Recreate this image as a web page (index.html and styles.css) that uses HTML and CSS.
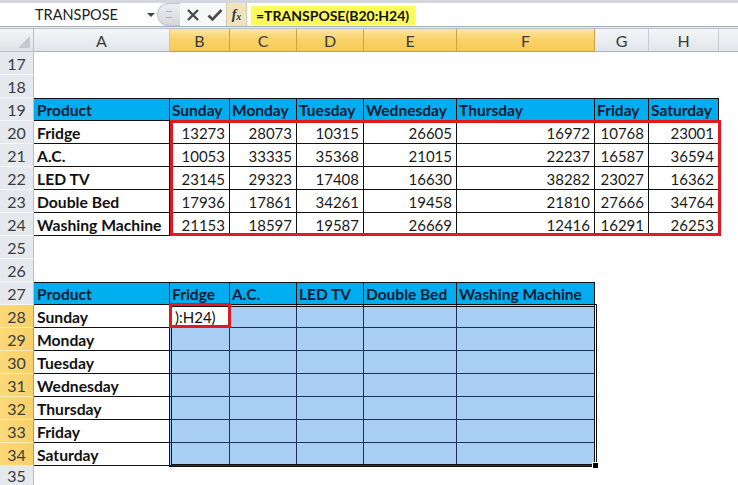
FILE: index.html
```html
<!DOCTYPE html>
<html>
<head>
<meta charset="utf-8">
<link rel="stylesheet" href="styles.css">
</head>
<body>
<div class="app">
  <div class="fbar">
    <div class="namebox"><span class="nbtext">TRANSPOSE</span><span class="dd"></span></div>
    <div class="pill"><span class="grip"></span></div>
    <div class="btns">
      <svg class="ico" width="14" height="14" viewBox="0 0 14 14"><path d="M2 2L12 12M12 2L2 12" stroke="#4a4a4a" stroke-width="2.4" fill="none"/></svg>
      <svg class="ico" width="16" height="14" viewBox="0 0 16 14"><path d="M1.5 7.5L5.5 11.5L14.5 2" stroke="#4a4a4a" stroke-width="2.6" fill="none"/></svg>
    </div>
    <div class="fx"><span>f</span><span class="x">x</span></div>
    <div class="finput"><span class="formula">=TRANSPOSE(B20:H24)</span></div>
  </div>
  <div class="gap"></div>
  <div class="sheet">
    <div class="row colhdr">
      <div class="corner"><span class="tri"></span></div>
      <div class="ch">A</div>
      <div class="ch on">B</div>
      <div class="ch on">C</div>
      <div class="ch on">D</div>
      <div class="ch on">E</div>
      <div class="ch on">F</div>
      <div class="ch">G</div>
      <div class="ch">H</div>
      <div class="ch last"></div>
    </div>
    <div class="row"><div class="rh">17</div></div>
    <div class="row"><div class="rh">18</div></div>
    <div class="row">
      <div class="rh">19</div>
      <div class="c hd top first">Product</div>
      <div class="c hd top">Sunday</div>
      <div class="c hd top">Monday</div>
      <div class="c hd top">Tuesday</div>
      <div class="c hd top">Wednesday</div>
      <div class="c hd top">Thursday</div>
      <div class="c hd top">Friday</div>
      <div class="c hd top">Saturday</div>
    </div>
    <div class="row">
      <div class="rh">20</div>
      <div class="c nm first">Fridge</div>
      <div class="c n">13273</div><div class="c n">28073</div><div class="c n">10315</div><div class="c n">26605</div><div class="c n">16972</div><div class="c n">10768</div><div class="c n">23001</div>
    </div>
    <div class="row">
      <div class="rh">21</div>
      <div class="c nm first">A.C.</div>
      <div class="c n">10053</div><div class="c n">33335</div><div class="c n">35368</div><div class="c n">21015</div><div class="c n">22237</div><div class="c n">16587</div><div class="c n">36594</div>
    </div>
    <div class="row">
      <div class="rh">22</div>
      <div class="c nm first">LED TV</div>
      <div class="c n">23145</div><div class="c n">29323</div><div class="c n">17408</div><div class="c n">16630</div><div class="c n">38282</div><div class="c n">23027</div><div class="c n">16362</div>
    </div>
    <div class="row">
      <div class="rh">23</div>
      <div class="c nm first">Double Bed</div>
      <div class="c n">17936</div><div class="c n">17861</div><div class="c n">34261</div><div class="c n">19458</div><div class="c n">21810</div><div class="c n">27666</div><div class="c n">34764</div>
    </div>
    <div class="row">
      <div class="rh">24</div>
      <div class="c nm first">Washing Machine</div>
      <div class="c n">21153</div><div class="c n">18597</div><div class="c n">19587</div><div class="c n">26669</div><div class="c n">12416</div><div class="c n">16291</div><div class="c n">26253</div>
    </div>
    <div class="row"><div class="rh">25</div></div>
    <div class="row"><div class="rh">26</div></div>
    <div class="row">
      <div class="rh">27</div>
      <div class="c hd top first">Product</div>
      <div class="c hd top">Fridge</div>
      <div class="c hd top">A.C.</div>
      <div class="c hd top">LED TV</div>
      <div class="c hd top">Double Bed</div>
      <div class="c hd top">Washing Machine</div>
    </div>
    <div class="row">
      <div class="rh on">28</div>
      <div class="c nm first">Sunday</div>
      <div class="c s active">):H24)</div><div class="c s"></div><div class="c s"></div><div class="c s"></div><div class="c s"></div>
    </div>
    <div class="row">
      <div class="rh on">29</div>
      <div class="c nm first">Monday</div>
      <div class="c s"></div><div class="c s"></div><div class="c s"></div><div class="c s"></div><div class="c s"></div>
    </div>
    <div class="row">
      <div class="rh on">30</div>
      <div class="c nm first">Tuesday</div>
      <div class="c s"></div><div class="c s"></div><div class="c s"></div><div class="c s"></div><div class="c s"></div>
    </div>
    <div class="row">
      <div class="rh on">31</div>
      <div class="c nm first">Wednesday</div>
      <div class="c s"></div><div class="c s"></div><div class="c s"></div><div class="c s"></div><div class="c s"></div>
    </div>
    <div class="row">
      <div class="rh on">32</div>
      <div class="c nm first">Thursday</div>
      <div class="c s"></div><div class="c s"></div><div class="c s"></div><div class="c s"></div><div class="c s"></div>
    </div>
    <div class="row">
      <div class="rh on">33</div>
      <div class="c nm first">Friday</div>
      <div class="c s"></div><div class="c s"></div><div class="c s"></div><div class="c s"></div><div class="c s"></div>
    </div>
    <div class="row">
      <div class="rh on">34</div>
      <div class="c nm first">Saturday</div>
      <div class="c s"></div><div class="c s"></div><div class="c s"></div><div class="c s"></div><div class="c s"></div>
    </div>
    <div class="row lastrow"><div class="rh last">35</div></div>

    <div class="redbox big"></div>
    <div class="selbox"></div>
    <div class="redbox small"></div>
    <div class="handle"></div>
  </div>
</div>
</body>
</html>
```

FILE: styles.css
```css
html, body {
  margin: 0;
  padding: 0;
  background: #fff;
}
body {
  font-family: Lato, "Open Sans", sans-serif;
  width: 738px;
  height: 485px;
  overflow: hidden;
}
.app {
  width: 738px;
  height: 485px;
  overflow: hidden;
}

/* formula bar */
.fbar {
  height: 23px;
  border-top: 3px solid #d3d7dd;
  border-bottom: 1px solid #a7b0bb;
  display: flex;
  background: #fff;
}
.namebox {
  width: 157px;
  display: flex;
  align-items: center;
  position: relative;
  font-size: 14.5px;
  color: #222;
}
.nbtext { padding-left: 35px; }
.dd {
  position: absolute;
  left: 147px;
  top: 10px;
  width: 0;
  height: 0;
  border-left: 4px solid transparent;
  border-right: 4px solid transparent;
  border-top: 4px solid #444;
}
.pill {
  width: 22px;
  border-radius: 12px 0 0 12px;
  background: linear-gradient(#eceef1, #d4d8de);
  border: 1px solid #c1c7cf;
  border-right: none;
  display: flex;
  align-items: center;
  justify-content: center;
}
.grip {
  width: 6px;
  height: 5px;
  border-top: 1px solid #b0b5bc;
  border-bottom: 1px solid #b0b5bc;
}
.btns {
  width: 44px;
  display: flex;
  align-items: center;
  justify-content: space-around;
  padding-left: 2px;
  background: #f6f7f9;
}
.fx {
  width: 19px;
  background: #eee4bf;
  display: flex;
  align-items: center;
  justify-content: center;
  font-family: "Liberation Serif", serif;
  font-style: italic;
  font-weight: bold;
  font-size: 14px;
  color: #333;
  border-left: 1px solid #d8cfa8;
  border-right: 1px solid #d8cfa8;
}
.fx .x { font-size: 10px; margin-top: 4px; }
.finput {
  flex: 1;
  padding-left: 4px;
  display: flex;
  align-items: center;
}
.formula {
  background: #fdfb5c;
  font-size: 14px;
  font-weight: bold;
  color: #111;
  width: 159px;
  height: 19px;
  line-height: 19px;
  padding-left: 5px;
  margin-top: 1px;
}
.gap {
  height: 1px;
  background: #e6e9ed;
}

/* sheet */
.sheet {
  position: relative;
}
.row {
  display: grid;
  grid-template-columns: 34px 136px 60px 67px 67px 93px 138px 54px 70px 1fr;
  height: 23px;
}
.row.colhdr {
  height: 24px;
}
.row.lastrow {
  height: 19px;
}
.corner {
  background: linear-gradient(#f3f4f6, #dfe2e7);
  border-right: 1px solid #b9c1cc;
  border-bottom: 1px solid #b9c1cc;
  border-top: 1px solid #b9c1cc;
  position: relative;
}
.tri {
  position: absolute;
  right: 3px;
  bottom: 3px;
  width: 0;
  height: 0;
  border-left: 12px solid transparent;
  border-bottom: 12px solid #c4c9d0;
}
.ch {
  background: linear-gradient(#f4f6f8, #e1e5ea);
  border-right: 1px solid #c2c9d3;
  border-bottom: 1px solid #a8b2bf;
  border-top: 1px solid #b9c1cc;
  display: flex;
  align-items: center;
  justify-content: center;
  font-size: 16px;
  color: #3a3a3a;
}
.ch.on {
  background: linear-gradient(#fde6a4, #f9d36b 45%, #f7cb55);
  border-right: 1px solid #cfa24a;
  border-bottom: 1px solid #c8983e;
}
.ch.last {
  border-right: none;
}
.rh {
  background: #e5e8ec;
  border-right: 1px solid #b6bec9;
  border-bottom: 1px solid #f4f5f7;
  display: flex;
  align-items: center;
  justify-content: center;
  font-size: 16px;
  color: #3c3c3c;
  padding-top: 1px;
}
.rh.last {
  border-bottom: none;
  padding-top: 0;
  padding-bottom: 1px;
}
.rh.on {
  background: linear-gradient(90deg, #fbd978, #f8d06a);
  border-bottom: 1px solid #fbeab8;
  border-right: 1px solid #c8983e;
}

.c {
  box-sizing: border-box;
  border-right: 1px solid #111;
  border-bottom: 1px solid #111;
  display: flex;
  align-items: flex-end;
  padding-bottom: 1px;
  font-size: 15px;
  color: #111;
  white-space: nowrap;
  overflow: hidden;
}
.c.top { border-top: 1px solid #111; }
.c.hd {
  background: #00aeef;
  font-weight: bold;
  font-size: 15.5px;
  color: #0e1a33;
  padding-left: 2px;
}
.c.first { padding-left: 3px; }
.c.nm {
  font-weight: bold;
  font-size: 15.7px;
  background: #fff;
}
.c.n {
  justify-content: flex-end;
  padding-right: 4px;
  color: #1a1a1a;
}
.c.s {
  background: #a9cef3;
  border-right: 1px solid #1c2f5e;
  border-bottom: 1px solid #1c2f5e;
}
.c.s.active {
  background: #fff;
  padding-left: 5px;
  font-size: 15px;
}

/* overlays */
.redbox {
  position: absolute;
  border: 3px solid #e11a22;
  box-sizing: border-box;
}
.redbox.big {
  left: 170px;
  top: 92px;
  width: 551px;
  height: 116px;
}
.redbox.small {
  left: 169px;
  top: 275px;
  width: 62px;
  height: 25px;
}
.selbox {
  position: absolute;
  left: 169px;
  top: 276px;
  width: 428px;
  height: 163px;
  box-sizing: border-box;
  border: 3px double #111;
}
.handle {
  position: absolute;
  left: 592px;
  top: 434px;
  width: 5px;
  height: 5px;
  background: #000;
  border: 1px solid #fff;
}
```
